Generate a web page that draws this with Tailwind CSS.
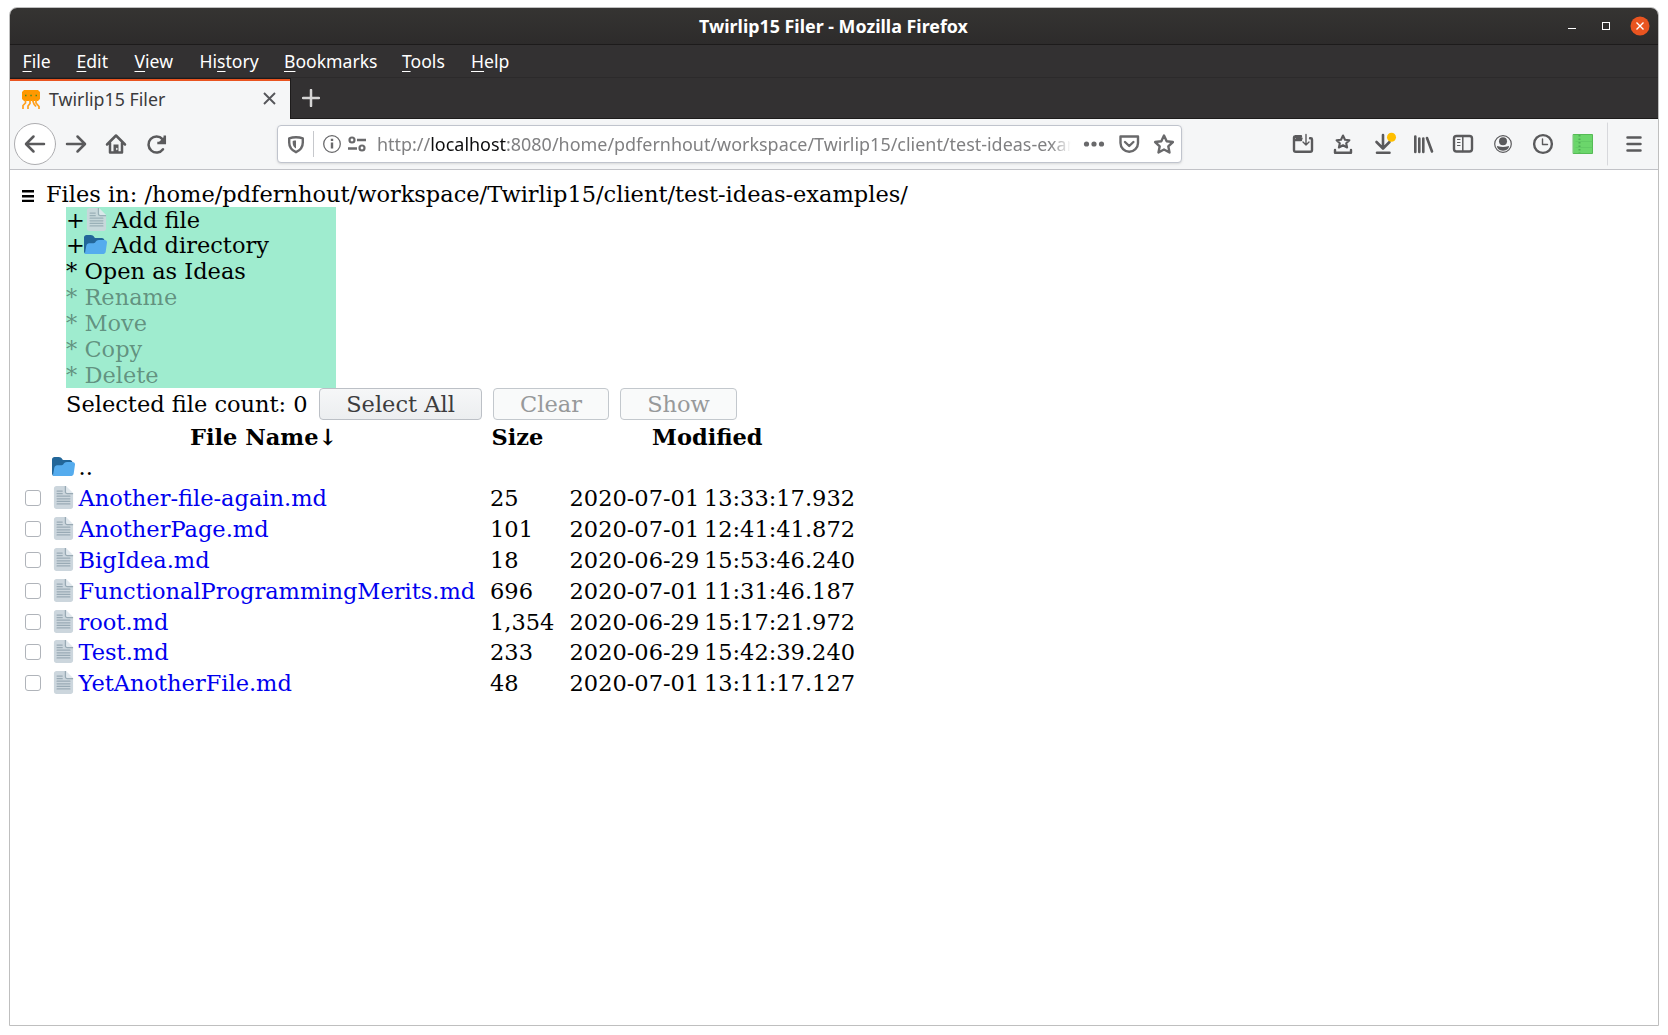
<!DOCTYPE html>
<html lang="en">
<head>
<meta charset="utf-8">
<title>Twirlip15 Filer</title>
<script src="https://cdn.jsdelivr.net/npm/@tailwindcss/browser@4"></script>
</head>
<body class="bg-white w-[1668px] h-[1035px] overflow-hidden pt-[7px] pl-[9px]">
<svg class="hidden">
  <symbol id="doc" viewBox="0 0 36 36">
    <path fill="#CCD6DD" d="M22 0H7C4.800 0 3 1.800 3 4v28c0 2.200 1.800 4 4 4h22c2.200 0 4-1.800 4-4V11h-9c-1 0-2-1-2-2V0z"/>
    <path fill="#E1E8ED" d="M22 0v9c0 1 1 2 2 2h9z"/>
    <path fill="#99AAB5" d="M22 0h-2v9c0 2.200 1.800 4 4 4h9v-2h-9c-1 0-2-1-2-2V0z"/>
    <path stroke="#99AAB5" stroke-width="2" stroke-linecap="round" d="M8 8h8M8 12h8M8 16h20M8 20h20M8 24h20M8 28h20"/>
  </symbol>
  <symbol id="folder" viewBox="0 0 36 36">
    <path fill="#226699" d="M0 29c0 2.200 1.800 4 4 4h24c2.200 0 4-1.800 4-4V12c0-2.200-1.800-4-4-4h-9c-3.600 0-3-5-8.400-5H4C1.800 3 0 4.800 0 7v22z"/>
    <path fill="#55ACEE" d="M32 11h-8.600C18 11 18.600 16 15 16H8c-2.200 0-4 1.800-4.400 4L2 29c-.2 1.500-.5 2.500-1.200 3 .7.700 1.800 1 3.200 1h26c2.200 0 3.800-1.800 4-4l2-14c.3-2.200-1.800-4-4-4z"/>
  </symbol>
</svg>

<div class="w-[1650px] h-[1019px] border border-[#bfbfbf] rounded-t-[8px] overflow-hidden flex flex-col bg-white font-['Noto_Sans',sans-serif]">

  <!-- Title bar -->
  <div class="h-[37px] shrink-0 bg-linear-to-b from-[#353432] to-[#2d2b2b] border-b border-[#1d1b1b] flex items-center">
    <div class="w-[1547px] pl-[100px] text-center text-white font-bold text-[17.85px] leading-[36px] whitespace-nowrap">Twirlip15 Filer - Mozilla Firefox</div>
    <svg class="w-[101px] h-[36px]" viewBox="1557 8 101 36" fill="none">
      <path d="M1568 28.500h8" stroke="#fff"/>
      <rect x="1602.500" y="22.500" width="7" height="7" stroke="#fff"/>
      <circle cx="1640" cy="26" r="9.500" fill="#e95420"/>
      <path d="M1636.500 22.500l7 7m0-7l-7 7" stroke="#fff" stroke-width="1.400"/>
    </svg>
  </div>

  <!-- Menu bar -->
  <div class="h-[33px] shrink-0 bg-[#333132] border-b border-[#2c2a2b] flex text-white text-[17.6px] leading-[32px] pl-[12.500px] whitespace-nowrap">
    <div class="w-[54px]"><span class="underline underline-offset-[3px] decoration-1">F</span>ile</div>
    <div class="w-[58px]"><span class="underline underline-offset-[3px] decoration-1">E</span>dit</div>
    <div class="w-[65px]"><span class="underline underline-offset-[3px] decoration-1">V</span>iew</div>
    <div class="w-[84.5px]">Hi<span class="underline underline-offset-[3px] decoration-1">s</span>tory</div>
    <div class="w-[118px]"><span class="underline underline-offset-[3px] decoration-1">B</span>ookmarks</div>
    <div class="w-[69px]"><span class="underline underline-offset-[3px] decoration-1">T</span>ools</div>
    <div><span class="underline underline-offset-[3px] decoration-1">H</span>elp</div>
  </div>

  <!-- Tab strip -->
  <div class="h-[41px] shrink-0 bg-[#333132] flex">
    <div class="w-[281px] border-r border-t border-[#1d1b1b] bg-[#f5f6f7]">
      <div class="h-full border-t-2 border-[#e95420] flex items-center pl-[12px] pb-[3px]">
        <svg class="w-[18px] h-[19px] mt-px shrink-0" viewBox="0 0 18 19" fill="none">
          <path d="M2 0h14l2 2v7l-2 2H2L0 9V2z" fill="#ff9800"/>
          <path d="M3.500 10v3L1 15.500V19M8 10v3.500L6 16v3M10.500 10l1.500 4 2 2.500M14 10v3l3 3.500V19" stroke="#ff9f1a" stroke-width="1.700"/>
          <path d="M3 5.500h1.500M8.300 5.500h1.500M13.500 5.500H15" stroke="#4c8c1c" stroke-width="1.600"/>
        </svg>
        <div class="ml-[9px] w-[214px] text-[17.8px] leading-[34px] text-[#3b3b3d] whitespace-nowrap">Twirlip15 Filer</div>
        <svg class="w-[13px] h-[13px] shrink-0" viewBox="0 0 13 13"><path d="M1 1l11 11M12 1L1 12" stroke="#55565a" stroke-width="1.900"/></svg>
      </div>
    </div>
    <div class="flex-1 border-b border-[#1d1b1b] pl-[11px] pt-[11px]">
      <svg class="w-[18px] h-[18px]" viewBox="0 0 18 18"><path d="M9 1v16M1 9h16" stroke="#d6d5d5" stroke-width="2.500" stroke-linecap="round"/></svg>
    </div>
  </div>

  <!-- Navigation toolbar -->
  <div class="h-[51px] shrink-0 bg-[#f5f6f7] border-b border-[#c1c2c7] flex items-center">
    <svg class="w-[267px] h-[50px] shrink-0" viewBox="10 119 267 50" fill="none" stroke="#5a5a5c" stroke-width="2.500" stroke-linecap="round" stroke-linejoin="round">
      <circle cx="35" cy="144" r="20.500" fill="#fff" stroke="#adadb0" stroke-width="1"/>
      <path d="M44 144H26.500M33.500 136.500L26 144l7.500 7.500"/>
      <path d="M67 144h17.500M77.500 136.500L85 144l-7.500 7.500"/>
      <path d="M107 144.500L116 135.500l9 9M110 143v9.500h12V143"/>
      <path d="M113.500 152.500v-8h5v8z" fill="#5a5a5c" stroke="none"/><path d="M116.800 148.500v1" stroke="#f5f6f7" stroke-width="1.300"/>
      <path d="M163 149.200a8 8 0 1 1-.5-10"/>
      <path d="M164.800 135.500v7.500h-7.500" stroke-linejoin="miter" stroke-linecap="butt"/><path d="M164 137v5.500h-5.500z" fill="#5a5a5c" stroke="none"/>
    </svg>
    <div class="w-[905px] h-[38px] shrink-0 rounded-[4px] border border-[#c0c4cd] bg-white shadow-sm flex items-center">
      <svg class="w-[99px] h-[36px] shrink-0" viewBox="278 126 99 36" fill="none" stroke="#69696b" stroke-width="2.400">
        <path d="M296 137.200c2.500 0 4.800.4 6.800 1.200v4.100c0 4.500-2.500 7.700-6.800 9.700-4.300-2-6.800-5.200-6.800-9.700v-4.100c2-.8 4.300-1.200 6.800-1.200z" stroke-linejoin="round"/>
        <path d="M296 140.500c-1.300 0-2.400.1-3.300.4v2c0 2.500 1.200 4.400 3.300 5.700z" fill="#69696b" stroke="none"/>
        <path d="M313.500 131v26" stroke="#c6c8cc" stroke-width="1"/>
        <circle cx="332" cy="144" r="8.300" stroke-width="1.300"/>
        <path d="M332 142.500v6M332 138.700v2.200" stroke-width="2.400"/>
        <circle cx="352" cy="140" r="2.500" stroke-width="2.200"/><path d="M357 140h9M348 148.500h9" stroke-width="2.600"/>
        <circle cx="362" cy="148" r="2.500" stroke-width="2.200"/>
      </svg>
      <div class="w-[694px] overflow-hidden whitespace-nowrap text-[17.95px] leading-[36px] text-[#808082] mask-r-from-[97%] mask-r-to-100%">http://<span class="text-[#0c0c0d]">localhost</span>:8080/home/pdfernhout/workspace/Twirlip15/client/test-ideas-exam</div>
      <svg class="w-[110px] h-[36px] shrink-0" viewBox="1071 126 110 36" fill="none" stroke="#69696b" stroke-width="2.400" stroke-linejoin="round" stroke-linecap="round">
        <g fill="#69696b" stroke="none"><circle cx="1086.500" cy="144" r="2.600"/><circle cx="1094" cy="144" r="2.600"/><circle cx="1101.500" cy="144" r="2.600"/></g>
        <path d="M1120.500 136.500h17.500v6.500a8.750 8.750 0 0 1-17.500 0z"/>
        <path d="M1125 142l4.200 4 4.200-4" stroke-width="2.400"/>
        <path d="M1164 135.500l2.700 5.700 6.200.8-4.600 4.300 1.200 6.200-5.500-3-5.500 3 1.200-6.200-4.600-4.300 6.200-.8z"/>
      </svg>
    </div>
    <svg class="w-[476px] h-[50px] shrink-0" viewBox="1182 119 476 50" fill="none" stroke="#5a5a5c" stroke-width="2.400" stroke-linejoin="round" stroke-linecap="round">
      <path d="M1301.500 138.500h-4l-2-2h-.5c-.5 0-1 .5-1 1V150c0 1 .7 1.800 1.800 1.800h14.400c1 0 1.800-.8 1.800-1.800v-10.500c0-.7-.5-1.200-1.200-1.200h-.8M1295.500 136.300h5.500M1294 140h7"/>
      <path d="M1306 134.500v10.500M1303 142l3 3 3-3" stroke-width="1.400"/>
      <path d="M1343 135.500l2 4.200 4.400.5-3.200 3 .9 4.300-4.100-2.200-4.100 2.200.9-4.300-3.200-3 4.400-.5z" stroke-width="2.100"/>
      <path d="M1335 150v2.800h16V150"/>
      <path d="M1383 135v13M1376.500 142l6.500 6.500 6.500-6.500M1377 152.800h12.500" stroke-width="2.600"/>
      <circle cx="1391.500" cy="137.300" r="4.500" fill="#ffbf00" stroke="none"/>
      <path d="M1415.300 136.500v15.500M1419.300 138.500v13.500M1423.300 138.500v13.500M1427 138l5 13.500" stroke-width="2.600"/>
      <rect x="1454" y="136" width="18" height="15.500" rx="2.500"/><path d="M1462.800 136v15.500" stroke-width="1.500"/><path d="M1457.500 139.500h2.500M1457.500 142.500h2.500M1457.500 145.500h2.500" stroke-width="1.200"/>
      <circle cx="1503" cy="144" r="8.300" stroke-width="1.200"/><circle cx="1503" cy="141.200" r="4" fill="#5a5a5c" stroke="none"/><path d="M1497 146c1.500 0 2.500 1 6 1s4.500-1 6-1c0 2.500-2 4.700-6 4.700s-6-2.200-6-4.700z" fill="#5a5a5c" stroke="none"/>
      <circle cx="1543" cy="144" r="8.900"/><path d="M1542.500 139v5.500h5" stroke-width="1.400"/>
      <rect x="1573.500" y="134.500" width="19" height="19" fill="#6bd66b" stroke="#55bb55" stroke-width="1"/>
      <path d="M1579.500 135v18" stroke="#4fae55" stroke-width="2" stroke-linecap="butt" stroke-dasharray="1.500 2"/><path d="M1576 141.500h16M1576 147.500h16" stroke="#5fc863" stroke-width=".8"/>
      <path d="M1607.500 123v42" stroke="#d7d8dc" stroke-width="1"/>
      <path d="M1627.500 137.500h13M1627.500 144h13M1627.500 150.500h13" stroke-width="2.500"/>
    </svg>
  </div>

  <!-- Page -->
  <div class="flex-1 pt-[11px] pl-[12px] text-[22.5px] text-black font-['DejaVu_Serif',serif] whitespace-nowrap">
    <div class="h-[26px] leading-[26px] flex items-center">
      <svg class="w-[12px] h-[12px] mt-[4px] mr-[12px]" viewBox="0 0 12 12"><path d="M0 1.200h12M0 6.200h12M0 11h12" stroke="#000" stroke-width="2.400"/></svg>
      <div>Files in: /home/pdfernhout/workspace/Twirlip15/client/test-ideas-examples/</div>
    </div>
    <div class="ml-[44px] w-[270px] h-[181px] bg-[#9feccf] leading-[26px]">
      <div class="h-[25px] flex"><span>+</span><svg class="w-[23px] h-[23px] mt-px mr-[4.500px] opacity-90"><use href="#doc"/></svg>Add file</div>
      <div class="h-[26px] flex"><span>+</span><svg class="w-[23px] h-[23px] mt-px -ml-px mr-[5.500px]"><use href="#folder"/></svg>Add directory</div>
      <div class="h-[26px]">* Open as Ideas</div>
      <div class="text-black/40">
        <div class="h-[26px]">* Rename</div>
        <div class="h-[26px]">* Move</div>
        <div class="h-[26px]">* Copy</div>
        <div class="h-[26px]">* Delete</div>
      </div>
    </div>
    <div class="ml-[44px] h-[32px] leading-[32px] flex">
      <div class="w-[253px]">Selected file count: 0</div>
      <button class="w-[163px] mr-[11px] rounded-[4px] border border-[#bcc0c6] bg-linear-to-b from-[#f6f7f8] to-[#eceef0] text-[#3c3c3e] leading-[30px]">Select All</button>
      <button class="w-[116px] mr-[11px] rounded-[4px] border border-[#c3c8cd] bg-[#f9fafa] text-[#97999a] leading-[30px]">Clear</button>
      <button class="w-[117px] rounded-[4px] border border-[#c3c8cd] bg-[#f9fafa] text-[#97999a] leading-[30px]">Show</button>
    </div>

    <div class="mt-[4px] h-[28px] leading-[26px] font-bold flex">
      <div class="w-[301.5px] ml-[168px]">File Name↓</div>
      <div class="w-[160.5px]">Size</div>
      <div>Modified</div>
    </div>
    <div class="h-[31px] leading-[31px] flex pl-[29.500px]"><svg class="w-[23px] h-[23px] mt-[3px] mr-[4px]"><use href="#folder"/></svg>..</div>
    <div id="rows"></div>
  </div>
</div>
<script>
const files = [
  ['Another-file-again.md', '25', '2020-07-01 13:33:17.932'],
  ['AnotherPage.md', '101', '2020-07-01 12:41:41.872'],
  ['BigIdea.md', '18', '2020-06-29 15:53:46.240'],
  ['FunctionalProgrammingMerits.md', '696', '2020-07-01 11:31:46.187'],
  ['root.md', '1,354', '2020-06-29 15:17:21.972'],
  ['Test.md', '233', '2020-06-29 15:42:39.240'],
  ['YetAnotherFile.md', '48', '2020-07-01 13:11:17.127'],
];
document.getElementById('rows').innerHTML = files.map(([name, size, date], i) => `
  <div class="${i === 4 ? 'h-[30px]' : 'h-[31px]'} leading-[31px] flex">
    <span class="w-[16px] h-[16px] mt-[7px] ml-[3px] mr-[10.5px] rounded-[3px] border border-[#b0b4ba] bg-white"></span>
    <svg class="w-[23px] h-[23px] mt-[3px] mr-[4px]"><use href="#doc"/></svg>
    <a class="w-[411.5px] text-[#0000ee]">${name}</a>
    <span class="w-[79.5px]">${size}</span>
    <span class="[word-spacing:-2.5px]">${date}</span>
  </div>`).join('');
</script>
</body>
</html>
